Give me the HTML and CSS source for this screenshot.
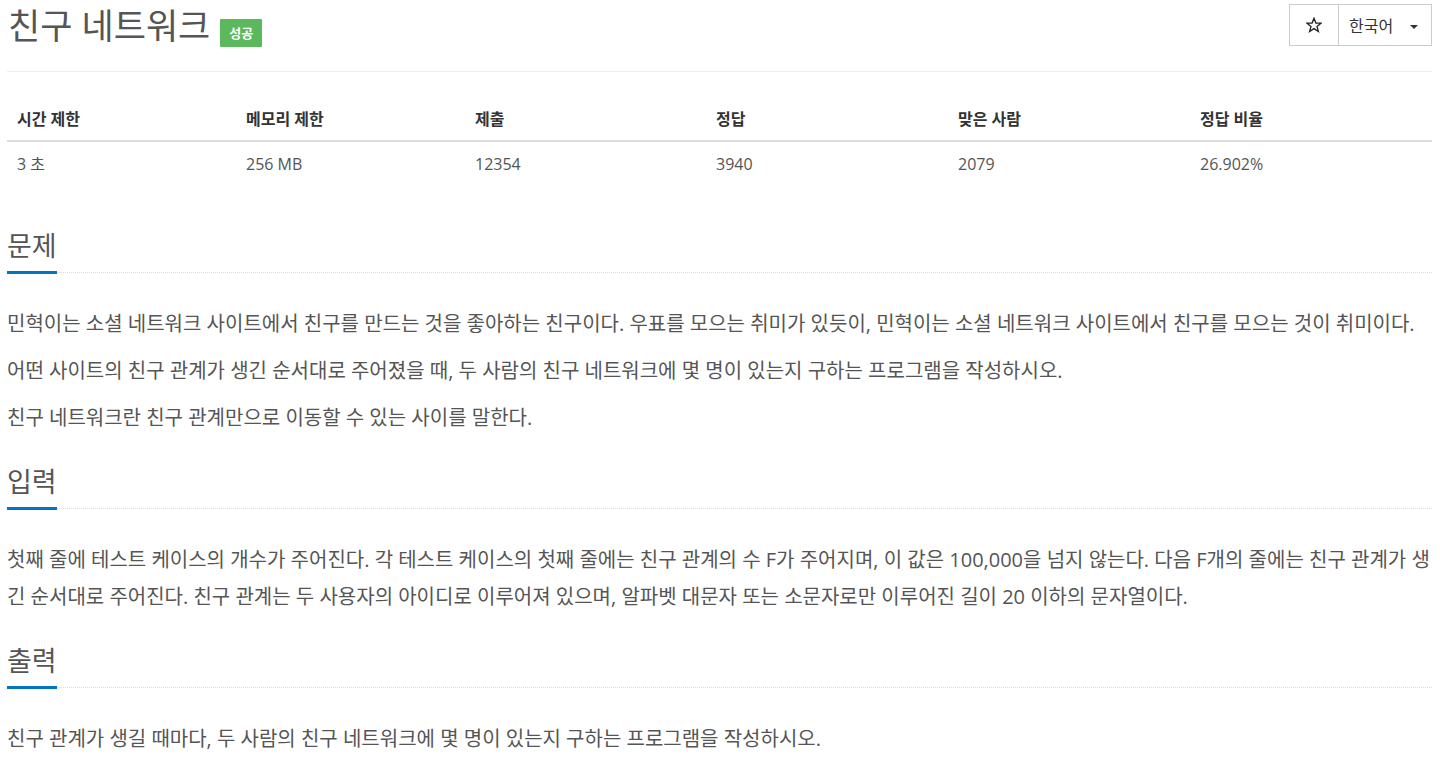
FILE: index.html
```html
<!DOCTYPE html>
<html lang="ko">
<head>
<meta charset="utf-8">
<title>친구 네트워크</title>
<link rel="stylesheet" href="styles.css">
</head>
<body>
<div class="page">
  <div class="page-header">
    <h1 class="title">
      <span class="title-text">친구 네트워크</span>
      <span class="label-success">성공</span>
    </h1>
    <div class="btn-group">
      <button class="btn btn-star" type="button">
        <svg width="16" height="16" viewBox="0 0 16 16" aria-hidden="true"><polygon points="8,1.2 9.9,6 15,6.2 11,9.4 12.4,14.5 8,11.6 3.6,14.5 5,9.4 1,6.2 6.1,6" fill="none" stroke="#222" stroke-width="1.3" stroke-linejoin="miter"/></svg>
      </button>
      <button class="btn btn-lang" type="button">한국어 <span class="caret"></span></button>
    </div>
  </div>

  <table class="info">
    <thead>
      <tr>
        <th class="c1">시간 제한</th>
        <th class="c2">메모리 제한</th>
        <th class="c3">제출</th>
        <th class="c4">정답</th>
        <th class="c5">맞은 사람</th>
        <th class="c6">정답 비율</th>
      </tr>
    </thead>
    <tbody>
      <tr>
        <td>3 초</td>
        <td>256 MB</td>
        <td>12354</td>
        <td>3940</td>
        <td>2079</td>
        <td>26.902%</td>
      </tr>
    </tbody>
  </table>

  <section class="section">
    <div class="headline"><h2>문제</h2></div>
    <div class="problem-text">
      <p>민혁이는 소셜 네트워크 사이트에서 친구를 만드는 것을 좋아하는 친구이다. 우표를 모으는 취미가 있듯이, 민혁이는 소셜 네트워크 사이트에서 친구를 모으는 것이 취미이다.</p>
      <p>어떤 사이트의 친구 관계가 생긴 순서대로 주어졌을 때, 두 사람의 친구 네트워크에 몇 명이 있는지 구하는 프로그램을 작성하시오.</p>
      <p>친구 네트워크란 친구 관계만으로 이동할 수 있는 사이를 말한다.</p>
    </div>
  </section>

  <section class="section">
    <div class="headline"><h2>입력</h2></div>
    <div class="problem-text">
      <p>첫째 줄에 테스트 케이스의 개수가 주어진다. 각 테스트 케이스의 첫째 줄에는 친구 관계의 수 F가 주어지며, 이 값은 100,000을 넘지 않는다. 다음 F개의 줄에는 친구 관계가 생긴 순서대로 주어진다. 친구 관계는 두 사용자의 아이디로 이루어져 있으며, 알파벳 대문자 또는 소문자로만 이루어진 길이 20 이하의 문자열이다.</p>
    </div>
  </section>

  <section class="section">
    <div class="headline"><h2>출력</h2></div>
    <div class="problem-text">
      <p>친구 관계가 생길 때마다, 두 사람의 친구 네트워크에 몇 명이 있는지 구하는 프로그램을 작성하시오.</p>
    </div>
  </section>
</div>
</body>
</html>
```

FILE: styles.css
```css
* {
  box-sizing: border-box;
}

html, body {
  margin: 0;
  padding: 0;
  background: #fff;
}

body {
  font-family: "Open Sans", "Noto Sans CJK KR", sans-serif;
  color: #555;
  font-size: 14px;
}

.page {
  padding: 0 8px 0 7px;
}

/* Header */
.page-header {
  display: flex;
  justify-content: space-between;
  align-items: flex-start;
  border-bottom: 1px solid #eee;
  height: 72px;
}

.title {
  display: flex;
  align-items: flex-start;
  gap: 10px;
  margin: 5px 0 0 1px;
  font-weight: normal;
}

.title-text {
  font-size: 35px;
  line-height: 42px;
  color: #555;
}

.label-success {
  margin-top: 14px;
  background: #5cb85c;
  color: #fff;
  font-size: 13px;
  font-weight: bold;
  line-height: 28px;
  height: 28px;
  padding: 0 9px;
  border-radius: 1px;
}

.btn-group {
  display: flex;
  margin-top: 4px;
}

.btn {
  font-family: "Open Sans", "Noto Sans CJK KR", sans-serif;
  background: #fff;
  border: 1px solid #ccc;
  height: 42px;
  color: #333;
  font-size: 16px;
  display: flex;
  align-items: center;
  justify-content: center;
  padding: 0;
}

.btn-star {
  width: 50px;
}

.btn-lang {
  width: 94px;
  margin-left: -1px;
  justify-content: flex-start;
  padding-left: 10px;
  gap: 17px;
}

.caret {
  display: inline-block;
  width: 0;
  height: 0;
  border-top: 4px solid #333;
  border-left: 4px solid transparent;
  border-right: 4px solid transparent;
  margin-top: 3px;
}

/* Table */
.info {
  width: 100%;
  table-layout: fixed;
  border-collapse: collapse;
  margin-top: 26px;
  margin-bottom: 26px;
}

.info th,
.info td {
  text-align: left;
  padding: 10px 10px;
  line-height: 20px;
}

.info th {
  font-size: 16px;
  font-weight: bold;
  color: #333;
  border-bottom: 2px solid #ddd;
  padding-top: 11px;
  padding-bottom: 11px;
}

.info td {
  font-size: 16px;
  color: #555;
  padding-top: 12px;
  padding-bottom: 10px;
}

.c1 { width: 229px; }
.c2 { width: 229px; }
.c3 { width: 241px; }
.c4 { width: 242px; }
.c5 { width: 242px; }
.c6 { width: auto; }

/* Sections */
.section {
  padding-top: 20px;
}

.headline {
  border-bottom: 1px dotted #ddd;
  margin-bottom: 32px;
}

.headline h2 {
  display: inline-block;
  margin: 0 0 -2px 0;
  font-size: 27px;
  line-height: 31px;
  font-weight: normal;
  color: #555;
  padding-bottom: 10px;
  border-bottom: 3px solid #0076c0;
}

.problem-text {
  font-size: 20px;
  line-height: 37px;
  color: #555;
  word-break: break-all;
}

.problem-text p {
  margin: 0 0 10px 0;
}
```
